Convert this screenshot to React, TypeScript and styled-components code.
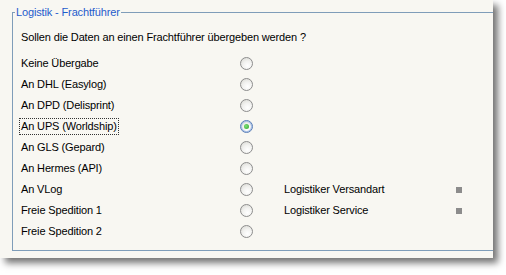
import React from "react";
import styled, { createGlobalStyle } from "styled-components";

const Global = createGlobalStyle`
  html, body { margin: 0; padding: 0; background: #ffffff; }
  body { font-family: "Liberation Sans", Arial, sans-serif; font-size: 11px; color: #000; letter-spacing: -0.14px; }
`;

const Stage = styled.div`
  width: 506px;
  height: 275px;
  background: #ffffff;
`;

const Window = styled.div`
  width: 493px;
  height: 258px;
  background: #f8f7f2;
  overflow: hidden;
  box-shadow: 5px 5px 7px rgba(0, 0, 0, 0.55);
  padding-top: 6px;
  box-sizing: border-box;
`;

const Group = styled.fieldset`
  margin: 0 0 0 12px;
  width: 500px;
  height: 245px;
  box-sizing: border-box;
  border: 1px solid #7f9db9;
  border-radius: 0;
  padding: 0 0 0 8px;
  display: flex;
  flex-direction: column;
`;

const Legend = styled.legend`
  color: #1f5ccc;
  padding: 0 1px;
  margin-left: -6px;
  font-size: 11px;
  line-height: 13px;
`;

const Question = styled.div`
  margin-top: 8px;
  height: 21px;
  line-height: 21px;
`;

const Rows = styled.div`
  margin-top: 5px;
  display: grid;
  grid-template-columns: 219px 13px 31px 172px 6px;
  grid-auto-rows: 21px;
  align-items: center;
`;

const Label = styled.span<{ $focused?: boolean }>`
  justify-self: start;
  line-height: 13px;
  padding: 1px 1px;
  margin-left: -1px;
  outline: ${(p) => (p.$focused ? "1px dotted #333" : "none")};
  outline-offset: 0;
`;

const Radio = styled.span<{ $checked?: boolean }>`
  display: flex;
  align-items: center;
  justify-content: center;
  width: 13px;
  height: 13px;
  box-sizing: border-box;
  border-radius: 50%;
  border: 1px solid ${(p) => (p.$checked ? "#5a7fb8" : "#8d8d8d")};
  background: radial-gradient(circle at 60% 70%, #ffffff 0%, #f2f2f0 45%, #d6d6d0 100%);
  box-shadow: ${(p) => (p.$checked ? "inset 0 0 0 1px #a8c0e8" : "none")};
  &::after {
    content: "";
    display: ${(p) => (p.$checked ? "block" : "none")};
    width: 5px;
    height: 5px;
    border-radius: 50%;
    background: radial-gradient(circle at 40% 40%, #7ee07a, #2fa52a);
  }
`;

const Spacer = styled.span``;

const SideLabel = styled.span`
  line-height: 13px;
`;

const Dot = styled.span`
  width: 6px;
  height: 6px;
  background: #8c8c8c;
`;

const rows: { label: string; checked?: boolean; side?: string }[] = [
  { label: "Keine Übergabe" },
  { label: "An DHL (Easylog)" },
  { label: "An DPD (Delisprint)" },
  { label: "An UPS (Worldship)", checked: true },
  { label: "An GLS (Gepard)" },
  { label: "An Hermes (API)" },
  { label: "An VLog", side: "Logistiker Versandart" },
  { label: "Freie Spedition 1", side: "Logistiker Service" },
  { label: "Freie Spedition 2" },
];

export default function App() {
  return (
    <Stage>
      <Global />
      <Window>
        <Group>
          <Legend>Logistik - Frachtführer</Legend>
          <Question>Sollen die Daten an einen Frachtführer übergeben werden ?</Question>
          <Rows>
            {rows.map((r) => (
              <React.Fragment key={r.label}>
                <Label $focused={r.checked}>{r.label}</Label>
                <Radio $checked={r.checked} />
                <Spacer />
                {r.side ? <SideLabel>{r.side}</SideLabel> : <Spacer />}
                {r.side ? <Dot /> : <Spacer />}
              </React.Fragment>
            ))}
          </Rows>
        </Group>
      </Window>
    </Stage>
  );
}
